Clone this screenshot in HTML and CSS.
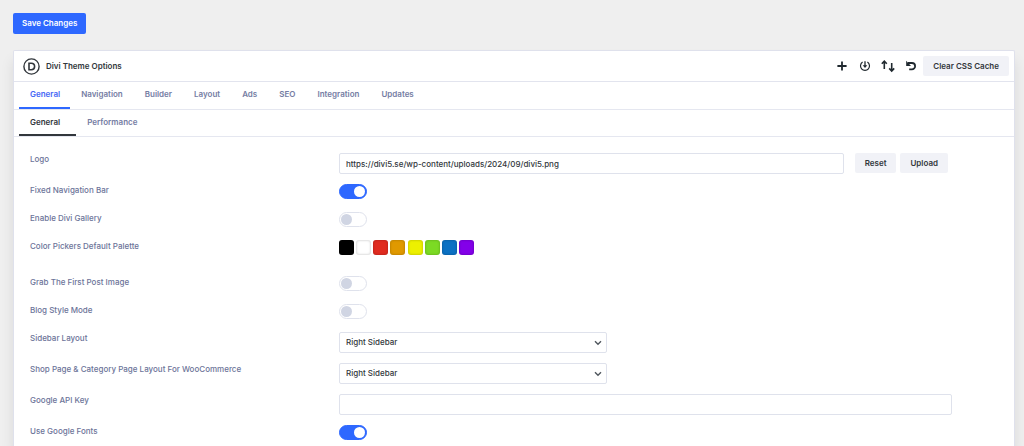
FILE: index.html
```html
<!DOCTYPE html>
<html lang="en">
<head>
<meta charset="utf-8">
<meta name="viewport" content="width=device-width, initial-scale=1">
<title>Divi Theme Options</title>
<link rel="stylesheet" href="styles.css">
</head>
<body>
<form class="page">
  <button class="save" type="button">Save Changes</button>

  <main class="panel">
    <header class="panel-header">
      <svg class="logo" viewBox="0 0 17 17" fill="none" stroke="#32373c" aria-hidden="true"><circle cx="8.5" cy="8.5" r="7.6" stroke-width="1.4"/><path d="M6 5.2h2.3a3.3 3.3 0 0 1 0 6.6H6z" stroke-width="1.6"/></svg>
      <h1 class="title">Divi Theme Options</h1>
      <div class="tools">
        <button class="tool" type="button" aria-label="Add"><svg viewBox="0 0 14 14"><path d="M7 2.4v9.2M2.4 7h9.2" stroke-width="1.8"/></svg></button>
        <button class="tool" type="button" aria-label="Save defaults"><svg viewBox="0 0 14 14"><path d="M4.6 3.1A4.5 4.5 0 1 0 9.4 3.1" stroke-width="1.2"/><path d="M7 2.2v5" stroke-width="1.3"/><path d="M4.7 6.3h4.6L7 9z" fill="#20292f" stroke="none"/></svg></button>
        <button class="tool" type="button" aria-label="Import and export"><svg viewBox="0 0 14 14"><path d="M3.3 10V2.6M.8 4.7l2.5-2.6 2.5 2.6M10.7 4v7.6M8.2 9.4l2.5 2.6 2.5-2.6" stroke-width="1.6"/></svg></button>
        <button class="tool" type="button" aria-label="Reset options"><svg viewBox="0 0 14 14"><path d="M4 4h3.9a3.2 3.2 0 1 1 0 6.4H5.2" stroke-width="1.8"/><path d="M2.2 1.8v5.1h4.8z" fill="#20292f" stroke="none"/></svg></button>
        <button class="btn cache" type="button">Clear CSS Cache</button>
      </div>
    </header>

    <nav class="tabs" aria-label="Sections">
      <a class="tab tab-active" href="#general">General</a>
      <a class="tab" href="#navigation">Navigation</a>
      <a class="tab" href="#builder">Builder</a>
      <a class="tab" href="#layout">Layout</a>
      <a class="tab" href="#ads">Ads</a>
      <a class="tab" href="#seo">SEO</a>
      <a class="tab" href="#integration">Integration</a>
      <a class="tab" href="#updates">Updates</a>
    </nav>
    <nav class="tabs subtabs" aria-label="General sections">
      <a class="tab tab-active" href="#general-main">General</a>
      <a class="tab" href="#performance">Performance</a>
    </nav>

    <div class="options">
      <div class="row">
        <label class="label" for="logo">Logo</label>
        <div class="control">
          <input class="field logo-field" id="logo" type="text" value="https://divi5.se/wp-content/uploads/2024/09/divi5.png">
          <button class="btn" type="button">Reset</button>
          <button class="btn" type="button">Upload</button>
        </div>
      </div>
      <div class="row">
        <label class="label" for="fixed-nav">Fixed Navigation Bar</label>
        <div class="control toggle-control"><input class="toggle" id="fixed-nav" type="checkbox" role="switch" checked></div>
      </div>
      <div class="row">
        <label class="label" for="gallery">Enable Divi Gallery</label>
        <div class="control toggle-control"><input class="toggle" id="gallery" type="checkbox" role="switch"></div>
      </div>
      <div class="row">
        <span class="label" id="palette-label">Color Pickers Default Palette</span>
        <div class="control palette" role="group" aria-labelledby="palette-label">
          <button class="swatch black" type="button" aria-label="Black"></button>
          <button class="swatch white" type="button" aria-label="White"></button>
          <button class="swatch red" type="button" aria-label="Red"></button>
          <button class="swatch orange" type="button" aria-label="Orange"></button>
          <button class="swatch yellow" type="button" aria-label="Yellow"></button>
          <button class="swatch green" type="button" aria-label="Green"></button>
          <button class="swatch blue" type="button" aria-label="Blue"></button>
          <button class="swatch purple" type="button" aria-label="Purple"></button>
        </div>
      </div>
      <div class="row">
        <label class="label" for="first-image">Grab The First Post Image</label>
        <div class="control toggle-control"><input class="toggle" id="first-image" type="checkbox" role="switch"></div>
      </div>
      <div class="row">
        <label class="label" for="blog-style">Blog Style Mode</label>
        <div class="control toggle-control"><input class="toggle" id="blog-style" type="checkbox" role="switch"></div>
      </div>
      <div class="row">
        <label class="label" for="sidebar">Sidebar Layout</label>
        <div class="control">
          <div class="select-wrap">
            <select class="field" id="sidebar"><option>Right Sidebar</option><option>Left Sidebar</option></select>
            <svg class="chevron" viewBox="0 0 8 6" aria-hidden="true"><path d="M1 1.2l3 3 3-3"/></svg>
          </div>
        </div>
      </div>
      <div class="row">
        <label class="label" for="shop">Shop Page &amp; Category Page Layout For WooCommerce</label>
        <div class="control">
          <div class="select-wrap">
            <select class="field" id="shop"><option>Right Sidebar</option><option>Left Sidebar</option></select>
            <svg class="chevron" viewBox="0 0 8 6" aria-hidden="true"><path d="M1 1.2l3 3 3-3"/></svg>
          </div>
        </div>
      </div>
      <div class="row">
        <label class="label" for="api-key">Google API Key</label>
        <div class="control"><input class="field" id="api-key" type="text"></div>
      </div>
      <div class="row">
        <label class="label" for="google-fonts">Use Google Fonts</label>
        <div class="control toggle-control"><input class="toggle" id="google-fonts" type="checkbox" role="switch" checked></div>
      </div>
    </div>
  </main>
</form>
</body>
</html>
```

FILE: styles.css
```css
* {
  box-sizing: border-box;
}

body {
  margin: 0;
  background: #efefef;
  color: #32373c;
  font: 500 8px/13px Inter, "Open Sans", sans-serif;
}

button,
input,
select {
  margin: 0;
  color: inherit;
  font: inherit;
}

.page {
  display: flex;
  flex-direction: column;
  align-items: flex-start;
  gap: 16px;
  min-height: 100vh;
  padding: 13px 9px 0 13px;
}

.save {
  height: 21px;
  padding: 0 9px;
  border: 0;
  border-radius: 2px;
  background: #2e68ff;
  color: #fff;
  font-weight: 600;
}

.panel {
  display: flex;
  flex: 1;
  flex-direction: column;
  align-self: stretch;
  border: 1px solid #dfe1ec;
  border-bottom: 0;
  border-radius: 2px 2px 0 0;
  background: #fff;
  box-shadow: 0 10px 14px rgba(0, 0, 0, 0.09);
}

.panel-header {
  display: flex;
  align-items: center;
  height: 31px;
  padding: 0 5px 0 9px;
  border-bottom: 1px solid #e2e4ee;
}

.logo {
  width: 17px;
  height: 17px;
  margin-right: 6px;
}

.title {
  margin: 0;
  font-size: 8px;
  font-weight: 600;
}

.tools {
  display: flex;
  align-items: center;
  gap: 9px;
  margin-left: auto;
}

.tool {
  width: 14px;
  height: 14px;
  padding: 0;
  border: 0;
  background: none;
}

.tool svg {
  display: block;
  fill: none;
  stroke: #20292f;
}

.btn {
  flex: none;
  height: 20px;
  padding: 0 10px;
  border: 0;
  border-radius: 2px;
  background: #f1f2f7;
  font-weight: 600;
}

.cache {
  margin-left: -4px;
}

.tabs {
  display: flex;
  height: 28px;
  padding: 0 5px;
  border-bottom: 1px solid #e5e7f0;
}

.tab {
  padding: 6px 11px 0;
  border-bottom: 2px solid transparent;
  color: #757da3;
  font-weight: 600;
  text-decoration: none;
}

.tab-active {
  padding-right: 10px;
  border-color: #2e68ff;
  color: #4668f5;
}

.subtabs {
  height: 27px;
}

.subtabs .tab-active {
  padding-right: 16px;
  border-color: #32373c;
  color: #32373c;
}

.options {
  display: grid;
  gap: 10px;
  padding: 16px 62px 0 16px;
}

.row {
  display: grid;
  grid-template-columns: 309px 1fr;
  align-items: start;
}

.label {
  color: #6c7499;
}

.control {
  display: flex;
  gap: 4px;
}

.field {
  width: 100%;
  min-width: 0;
  height: 21px;
  padding: 0 6px;
  border: 1px solid #dfe2ec;
  border-radius: 2px;
  background: #fff;
}

.logo-field {
  margin-right: 7px;
}

.control:has(.logo-field) {
  padding-right: 4px;
}

.toggle-control {
  height: 18px;
}

.toggle {
  display: flex;
  width: 28px;
  height: 15px;
  padding: 1px;
  border: 1px solid #dfe2ec;
  border-radius: 8px;
  background: #fff;
  appearance: none;
}

.toggle::before {
  width: 11px;
  height: 11px;
  border-radius: 50%;
  background: #d0d5e3;
  content: "";
}

.toggle:checked {
  justify-content: flex-end;
  border-color: #2e68ff;
  background: #2e68ff;
}

.toggle:checked::before {
  background: #fff;
}

.palette {
  justify-content: space-between;
  gap: 0;
  width: 135px;
  height: 26px;
}

.swatch {
  width: 15px;
  height: 15px;
  padding: 0;
  border: 0;
  border-radius: 3px;
  box-shadow: inset 0 0 2px 1px rgba(0, 0, 0, 0.13);
}

.black { background: #000; }
.white { background: #fff; }
.red { background: #e02b20; }
.orange { background: #e09900; }
.yellow { background: #edf000; }
.green { background: #7cda24; }
.blue { background: #0c71c3; }
.purple { background: #8300e9; }

.select-wrap {
  display: grid;
  align-items: center;
  width: 268px;
}

.select-wrap .field,
.chevron {
  grid-area: 1 / 1;
}

.select-wrap .field {
  appearance: none;
}

.chevron {
  justify-self: end;
  width: 8px;
  height: 6px;
  margin-right: 5px;
  fill: none;
  stroke: #50575e;
  stroke-width: 1.4;
  pointer-events: none;
}
```
